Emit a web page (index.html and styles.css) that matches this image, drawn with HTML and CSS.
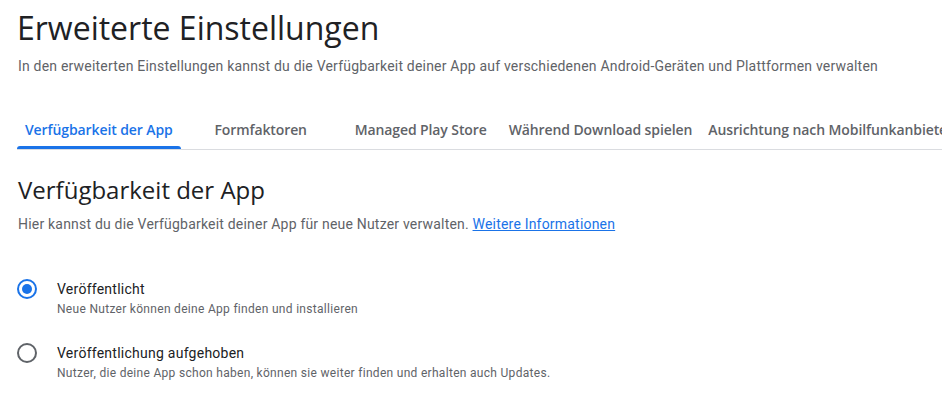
FILE: index.html
```html
<!DOCTYPE html>
<html lang="de">
<head>
<meta charset="utf-8">
<title>Erweiterte Einstellungen</title>
<link rel="stylesheet" href="styles.css">
</head>
<body>
<main class="page">
  <header class="page-header">
    <h1 class="page-title">Erweiterte Einstellungen</h1>
    <p class="page-desc">In den erweiterten Einstellungen kannst du die Verfügbarkeit deiner App auf verschiedenen Android-Geräten und Plattformen verwalten</p>
  </header>
  <nav class="tabs">
    <a class="tab tab-active">Verfügbarkeit der App</a>
    <a class="tab">Formfaktoren</a>
    <a class="tab">Managed Play Store</a>
    <a class="tab">Während Download spielen</a>
    <a class="tab">Ausrichtung nach Mobilfunkanbietern</a>
  </nav>
  <section class="section">
    <h2 class="section-title">Verfügbarkeit der App</h2>
    <p class="section-desc">Hier kannst du die Verfügbarkeit deiner App für neue Nutzer verwalten. <a class="link" href="#">Weitere Informationen</a></p>
    <div class="options">
      <label class="option">
        <span class="radio radio-checked"></span>
        <span class="option-text">
          <span class="option-label">Veröffentlicht</span>
          <span class="option-hint">Neue Nutzer können deine App finden und installieren</span>
        </span>
      </label>
      <label class="option">
        <span class="radio"></span>
        <span class="option-text">
          <span class="option-label">Veröffentlichung aufgehoben</span>
          <span class="option-hint">Nutzer, die deine App schon haben, können sie weiter finden und erhalten auch Updates.</span>
        </span>
      </label>
    </div>
  </section>
</main>
</body>
</html>
```
FILE: styles.css
```css
* { box-sizing: border-box; }
html, body { margin: 0; padding: 0; background: #fff; }
body {
  font-family: Roboto, "Liberation Sans", Arial, sans-serif;
  color: #202124;
  overflow: hidden;
  width: 942px;
}
.page { padding: 0 0 0 17px; }
.page-header { padding-top: 8px; }
.page-title {
  margin: 0;
  font-family: "Open Sans", Roboto, sans-serif;
  font-weight: 400;
  font-size: 32px;
  line-height: 40px;
  color: #202124;
}
.page-desc {
  margin: 8px 0 0 1px;
  font-size: 14px;
  line-height: 20px;
  letter-spacing: 0.2px;
  color: #5f6368;
}
.tabs {
  display: flex;
  margin-top: 33px;
  border-bottom: 1px solid #dadce0;
  white-space: nowrap;
  overflow: hidden;
}
.tab {
  flex: none;
  min-width: 160px;
  padding: 0 8px;
  height: 40px;
  display: flex;
  align-items: center;
  justify-content: center;
  font-family: "Open Sans", Roboto, sans-serif;
  font-weight: 600;
  font-size: 14px;
  letter-spacing: -0.1px;
  color: #5f6368;
  position: relative;
}
.tab-active { color: #1a73e8; }
.tab-active::after {
  content: "";
  position: absolute;
  left: 0; right: 0; bottom: 0;
  height: 3px;
  background: #1a73e8;
  border-radius: 3px 3px 0 0;
}
.section { padding-top: 24px; }
.section-title {
  margin: 0 0 0 1px;
  font-family: "Open Sans", Roboto, sans-serif;
  font-weight: 400;
  font-size: 24px;
  line-height: 32px;
}
.section-desc {
  margin: 8px 0 0 1px;
  font-size: 14px;
  line-height: 20px;
  letter-spacing: 0.2px;
  color: #5f6368;
}
.link { color: #1a73e8; text-decoration: underline; }
.options {
  display: flex;
  flex-direction: column;
  gap: 24px;
  margin-top: 45px;
}
.option { display: flex; align-items: flex-start; gap: 20px; }
.radio {
  flex: none;
  width: 20px;
  height: 20px;
  border: 2px solid #5f6368;
  border-radius: 50%;
  display: flex;
  align-items: center;
  justify-content: center;
}
.radio-checked { border-color: #1a73e8; }
.radio-checked::after {
  content: "";
  width: 10px; height: 10px;
  border-radius: 50%;
  background: #1a73e8;
}
.option-text { display: flex; flex-direction: column; }
.option-label { font-size: 14px; line-height: 20px; letter-spacing: 0.25px; color: #202124; }
.option-hint { font-size: 12px; line-height: 20px; letter-spacing: 0.3px; color: #5f6368; }
```
